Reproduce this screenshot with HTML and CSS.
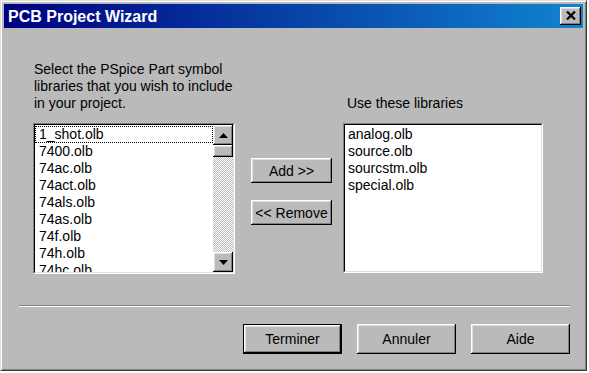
FILE: index.html
```html
<!DOCTYPE html>
<html>
<head>
<meta charset="utf-8">
<title>PCB Project Wizard</title>
<link rel="stylesheet" href="styles.css">
</head>
<body>
<div class="window">
  <div class="titlebar">
    <span class="title">PCB Project Wizard</span>
    <button class="close" aria-label="Close">
      <svg width="10" height="9" viewBox="0 0 10 9"><path d="M1 0.5 L9 8.5 M9 0.5 L1 8.5" stroke="#000" stroke-width="2.2" fill="none"/></svg>
    </button>
  </div>
  <div class="content">
    <div class="pick">
      <p class="label label-left">Select the PSpice Part symbol<br>libraries that you wish to include<br>in your project.</p>
      <p class="label label-right">Use these libraries</p>
      <div class="listbox listbox-left">
        <div class="listbox-inner">
          <ul class="items">
            <li class="focused">1_shot.olb</li>
            <li>7400.olb</li>
            <li>74ac.olb</li>
            <li>74act.olb</li>
            <li>74als.olb</li>
            <li>74as.olb</li>
            <li>74f.olb</li>
            <li>74h.olb</li>
            <li>74hc.olb</li>
          </ul>
          <div class="scrollbar">
            <div class="sb-btn"><svg width="9" height="5" viewBox="0 0 9 5"><polygon points="4.5,0 9,5 0,5" fill="#000"/></svg></div>
            <div class="sb-thumb"></div>
            <div class="sb-track"></div>
            <div class="sb-btn"><svg width="9" height="5" viewBox="0 0 9 5"><polygon points="0,0 9,0 4.5,5" fill="#000"/></svg></div>
          </div>
        </div>
      </div>
      <div class="movers">
        <button class="btn btn-move">Add &gt;&gt;</button>
        <button class="btn btn-move">&lt;&lt; Remove</button>
      </div>
      <div class="listbox listbox-right">
        <div class="listbox-inner">
          <ul class="items">
            <li>analog.olb</li>
            <li>source.olb</li>
            <li>sourcstm.olb</li>
            <li>special.olb</li>
          </ul>
        </div>
      </div>
    </div>
    <div class="sep"></div>
    <div class="actions">
      <button class="btn btn-lg btn-default">Terminer</button>
      <button class="btn btn-lg">Annuler</button>
      <button class="btn btn-lg">Aide</button>
    </div>
  </div>
</div>
</body>
</html>
```
FILE: styles.css
```css
body {
  margin: 0;
  background: #ffffff;
  font-family: "Liberation Sans", Arial, sans-serif;
  font-size: 14px;
  color: #000;
}

.window {
  width: 587px;
  height: 371px;
  box-sizing: border-box;
  background: #bababa;
  border: 1px solid;
  border-color: #dfdfdf #404040 #404040 #dfdfdf;
  box-shadow: inset 1px 1px #ffffff, inset -1px -1px #808080;
  padding: 3px;
}

.titlebar {
  height: 24px;
  display: flex;
  align-items: center;
  justify-content: space-between;
  background: linear-gradient(to right, #000080, #1084d0);
  color: #fff;
  padding-left: 4px;
}

.title {
  font-weight: bold;
  font-size: 16px;
  line-height: 23px;
}

.close {
  width: 21px;
  height: 18px;
  margin-right: 2px;
  padding: 0;
  border: 0;
  background: #bababa;
  box-shadow: inset -1px -1px #000, inset 1px 1px #fff, inset -2px -2px #808080, inset 2px 2px #dfdfdf;
  display: flex;
  align-items: center;
  justify-content: center;
}

.close svg {
  display: block;
  margin-top: -1px;
}

.content {
  padding: 33px 0 0 29px;
}

.pick {
  display: grid;
  grid-template-columns: 202px 16px 81px 11px 200px;
  grid-template-rows: auto auto;
  row-gap: 11px;
}

.label {
  margin: 0;
  line-height: 17px;
}

.label-left {
  grid-column: 1;
  grid-row: 1;
  padding-left: 1px;
}

.label-right {
  grid-column: 5;
  grid-row: 1;
  align-self: end;
  padding-left: 4px;
}

.listbox {
  box-sizing: border-box;
  border: 1px solid;
  border-color: #808080 #ffffff #ffffff #808080;
}

.listbox-inner {
  height: 100%;
  box-sizing: border-box;
  border: 1px solid;
  border-color: #000 #dfdfdf #dfdfdf #000;
  background: #fff;
  display: flex;
  overflow: hidden;
}

.listbox-left {
  grid-column: 1;
  grid-row: 2;
  height: 151px;
}

.listbox-right {
  grid-column: 5;
  grid-row: 2;
  height: 150px;
}

.items {
  list-style: none;
  margin: 0;
  padding: 1px 0 0;
  flex: 1;
  min-width: 0;
}

.items li {
  line-height: 17px;
  height: 17px;
  padding-left: 3px;
  white-space: nowrap;
}

.listbox-left .items li {
  padding-left: 4px;
}

.items li.focused {
  outline: 1px dotted #000;
  outline-offset: -1px;
}

.scrollbar {
  width: 20px;
  display: flex;
  flex-direction: column;
}

.sb-btn,
.sb-thumb {
  background: #bababa;
  box-shadow: inset -1px -1px #000, inset 1px 1px #fff, inset -2px -2px #808080, inset 2px 2px #dfdfdf;
}

.sb-btn {
  height: 20px;
  display: flex;
  align-items: center;
  justify-content: center;
}

.sb-btn svg {
  display: block;
}

.sb-thumb {
  height: 12px;
}

.sb-track {
  flex: 1;
  background-image: repeating-conic-gradient(#bababa 0% 25%, #ffffff 0% 50%);
  background-size: 2px 2px;
}

.movers {
  grid-column: 3;
  grid-row: 2;
  padding-top: 35px;
  display: flex;
  flex-direction: column;
  gap: 17px;
}

.btn {
  font-family: "Liberation Sans", Arial, sans-serif;
  font-size: 14px;
  color: #000;
  background: #bababa;
  border: 0;
  padding: 0;
  box-sizing: border-box;
  box-shadow: inset -1px -1px #000, inset 1px 1px #fff, inset -2px -2px #808080, inset 2px 2px #dfdfdf;
}

.btn-move {
  width: 81px;
  height: 25px;
}

.sep {
  margin: 31px 0 0 -14px;
  width: 551px;
  border-top: 1px solid #808080;
  border-bottom: 1px solid #ffffff;
}

.actions {
  display: flex;
  justify-content: flex-end;
  gap: 15px;
  width: 537px;
  margin-top: 17px;
}

.btn-lg {
  width: 99px;
  height: 30px;
}

.btn-default {
  border: 1px solid #000;
}
```
